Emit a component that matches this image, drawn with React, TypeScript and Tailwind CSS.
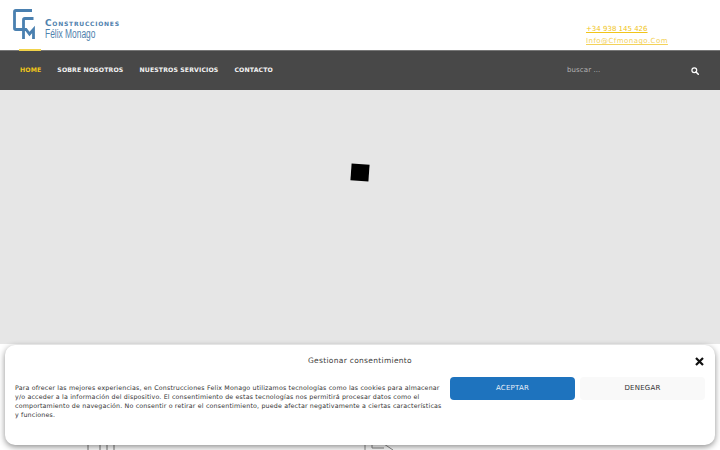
const font = "font-['DejaVu_Sans','Liberation_Sans',sans-serif]";

const Logo = () => (
  <div className="flex items-start">
    <svg width="24" height="31" viewBox="0 0 24 31" className="shrink-0">
      <path d="M19 1.500H2.800Q1.500 1.500 1.500 2.800V19.200Q1.500 20.500 2.800 20.500H10.500" fill="none" stroke="#4a80b0" strokeWidth="2.800" />
      <path d="M20.500 9.500H11.800Q10.500 9.500 10.500 10.800V30" fill="none" stroke="#4a80b0" strokeWidth="2.800" />
      <path d="M10.500 20.500H13L16.500 25L20.500 20.500V30" fill="none" stroke="#4a80b0" strokeWidth="2.800" />
    </svg>
    <div className="ml-[8px] mt-[9px]">
      <div className="font-['DejaVu_Sans',sans-serif] text-[9px] leading-[10px] font-bold tracking-[0.75px] text-[#4f81ad] whitespace-nowrap [font-variant-caps:small-caps]">
        Construcciones
      </div>
      <div className="font-['Liberation_Sans',sans-serif] text-[12px] leading-[13px] text-[#4f81ad] whitespace-nowrap scale-x-[0.7] origin-left">
        Félix Monago
      </div>
    </div>
  </div>
);

const NavItem = ({ label, active }: { label: string; active?: boolean }) => (
  <a className={`text-[6.200px] font-bold tracking-[0.12px] whitespace-nowrap ${active ? "text-[#f0c419]" : "text-[#f2f2f2]"}`}>
    {label}
  </a>
);

export default function App() {
  return (
    <div className={`relative h-[450px] w-[720px] overflow-hidden bg-white ${font}`}>
      <header className="flex h-[50px] justify-between bg-white pl-[13px] pr-[52px] pt-[9px]">
        <Logo />
        <div className="pt-[14px] text-[7px] leading-[12px] text-[#f0c419] w-[82px]">
          <div className="underline font-medium whitespace-nowrap">+34 938 145 426</div>
          <div className="underline whitespace-nowrap tracking-[0.45px] text-[#f3d25a]">Info@Cfmonago.Com</div>
        </div>
      </header>

      <nav className="relative flex h-[40px] items-center justify-between border-t border-[#777] bg-[#484848] pl-[20px] pr-[21px]">
        <div className="absolute left-[19px] top-[-2px] h-[2px] w-[22px] bg-[#f0d24a]" />
        <div className="flex items-center gap-[16px] -mt-[1px]">
          <NavItem label="HOME" active />
          <NavItem label="SOBRE NOSOTROS" />
          <NavItem label="NUESTROS SERVICIOS" />
          <NavItem label="CONTACTO" />
        </div>
        <div className="flex items-center gap-[91px]">
          <span className="w-[33px] text-[7px] tracking-[0.1px] text-[#b4b4b4] whitespace-nowrap">buscar ...</span>
          <svg width="8" height="8" viewBox="0 0 8 8">
            <circle cx="3.300" cy="3.300" r="2.400" fill="none" stroke="#fff" strokeWidth="1.200" />
            <path d="M5 5L7.300 7.300" stroke="#fff" strokeWidth="1.500" strokeLinecap="round" />
          </svg>
        </div>
      </nav>

      <main className="flex h-[254px] justify-center bg-[#e6e6e6] pt-[74px]">
        <div className="h-[17px] w-[18px] rotate-[4deg] bg-black" />
      </main>

      <div className="relative h-[106px] bg-white">
        <svg width="30" height="6" className="absolute left-[87px] top-[100px]">
          <path d="M1 0V6M13 0V6M20 0V6M27 0V6" stroke="#777" strokeWidth="1" fill="none" />
        </svg>
        <svg width="32" height="8" className="absolute left-[364px] top-[98px]">
          <path d="M1 0V8M8 2V6H20M20 2L29 8" stroke="#888" strokeWidth="1" fill="none" />
        </svg>
      </div>

      {/* consent banner */}
      <div className="absolute bottom-[5px] left-[5px] right-[5px] h-[100px] rounded-[10px] bg-white px-[10px] pt-[10px] shadow-[0_2px_6px_rgba(0,0,0,0.45)]">
        <div className="relative flex h-[12px] items-center justify-center">
          <span className="text-[7.500px] tracking-[0.3px] text-[#3c3c3c]">Gestionar consentimiento</span>
          <svg width="9" height="9" viewBox="0 0 9 9" className="absolute right-[1px] top-[2px]">
            <path d="M1 1L8 8M8 1L1 8" stroke="#111" strokeWidth="2.200" />
          </svg>
        </div>
        <div className="mt-[14px] flex items-start gap-[5px]">
          <p className="mt-[2px] w-[430px] shrink-0 text-[6.300px] leading-[9px] tracking-[0.17px] text-[#333]">
            Para ofrecer las mejores experiencias, en Construcciones Felix Monago utilizamos tecnologías como las cookies para almacenar y/o acceder a la información del dispositivo. El consentimiento de estas tecnologías nos permitirá procesar datos como el comportamiento de navegación. No consentir o retirar el consentimiento, puede afectar negativamente a ciertas características y funciones.
          </p>
          <div className="flex flex-1 gap-[5px] -mt-[4px]">
            <button className="h-[23px] w-[125px] rounded-[4px] bg-[#1e73be] text-[7px] tracking-[0.2px] text-[#e8f0f8]">ACEPTAR</button>
            <button className="h-[23px] w-[125px] rounded-[4px] bg-[#f9f9f9] text-[7px] tracking-[0.2px] text-[#333]">DENEGAR</button>
          </div>
        </div>
      </div>
    </div>
  );
}
